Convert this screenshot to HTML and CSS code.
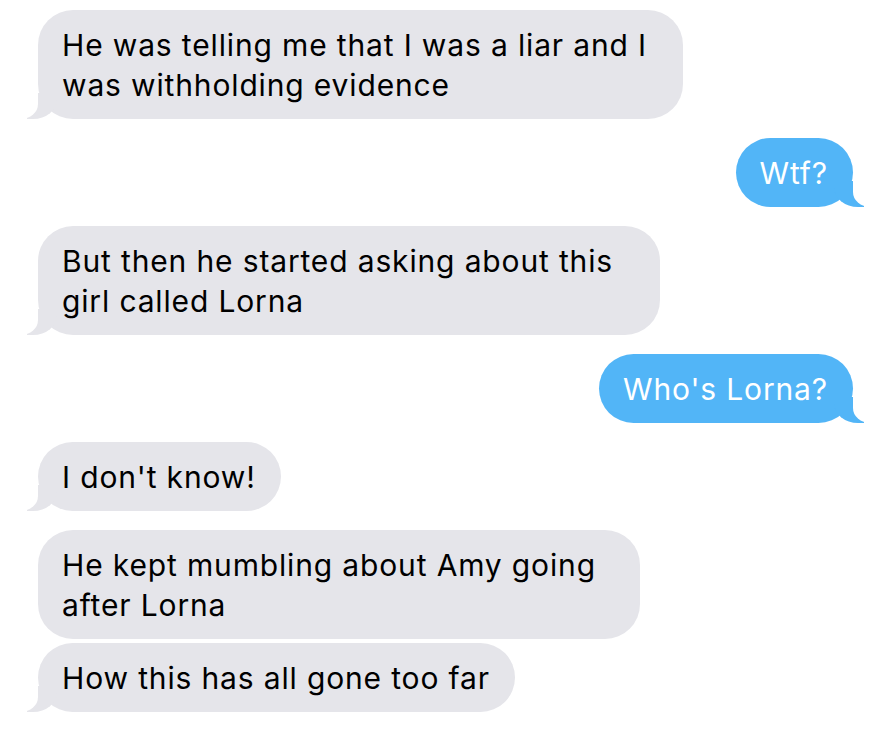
FILE: index.html
```html
<!DOCTYPE html>
<html>
<head>
<meta charset="utf-8">
<link rel="stylesheet" href="styles.css">
</head>
<body>
<div class="chat">
  <div class="bubble them tail w-645">He was telling me that I was a liar and I was withholding evidence</div>
  <div class="bubble me tail">Wtf?</div>
  <div class="bubble them tail w-622">But then he started asking about this girl called Lorna</div>
  <div class="bubble me tail">Who's Lorna?</div>
  <div class="bubble them tail">I don't know!</div>
  <div class="group">
    <div class="bubble them w-602">He kept mumbling about Amy going after Lorna</div>
    <div class="bubble them tail">How this has all gone too far</div>
  </div>
</div>
</body>
</html>
```
FILE: styles.css
```css
html, body {
  margin: 0;
  padding: 0;
  background: #ffffff;
}
body {
  width: 892px;
  height: 730px;
  overflow: hidden;
  font-family: Inter, "Liberation Sans", sans-serif;
}
.chat {
  display: flex;
  flex-direction: column;
  gap: 19px;
  padding: 10px 39px 0 38px;
}
.group {
  display: flex;
  flex-direction: column;
  gap: 4px;
}
.bubble {
  position: relative;
  z-index: 0;
  box-sizing: border-box;
  max-width: 645px;
  width: fit-content;
  padding: 15px 25px 14px 24px;
  border-radius: 35px;
  font-size: 30px;
  letter-spacing: 0.85px;
  line-height: 40px;
}
.w-645 { width: 645px; }
.w-622 { width: 622px; }
.w-602 { width: 602px; }
.them {
  background: #e5e5ea;
  color: #000;
  align-self: flex-start;
}
.me {
  background: #52b5f7;
  color: #fff;
  align-self: flex-end;
}
.tail::before,
.tail::after {
  content: "";
  position: absolute;
  bottom: 0;
  height: 26px;
}
.them.tail::before {
  left: -11px;
  width: 30px;
  background: #e5e5ea;
  border-bottom-right-radius: 24px 20px;
  z-index: -2;
}
.them.tail::after {
  left: -40px;
  width: 40px;
  background: #fff;
  border-bottom-right-radius: 17px 15px;
  z-index: -1;
}
.me.tail::before {
  right: -11px;
  width: 30px;
  background: #52b5f7;
  border-bottom-left-radius: 24px 20px;
  z-index: -2;
}
.me.tail::after {
  right: -40px;
  width: 40px;
  background: #fff;
  border-bottom-left-radius: 17px 15px;
  z-index: -1;
}
```
